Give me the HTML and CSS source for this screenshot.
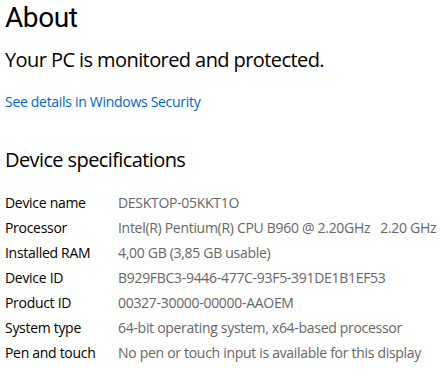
FILE: index.html
```html
<!DOCTYPE html>
<html>
<head>
<meta charset="utf-8">
<link rel="stylesheet" href="styles.css">
</head>
<body>
<main class="page">
  <h1 class="title">About</h1>
  <h2 class="status">Your PC is monitored and protected.</h2>
  <a class="link" href="#">See details in Windows Security</a>
  <h2 class="section">Device specifications</h2>
  <dl class="specs">
    <div class="row"><dt>Device name</dt><dd>DESKTOP-05KKT1O</dd></div>
    <div class="row"><dt>Processor</dt><dd>Intel(R) Pentium(R) CPU B960 @ 2.20GHz&nbsp;&nbsp;&nbsp;2.20 GHz</dd></div>
    <div class="row"><dt>Installed RAM</dt><dd>4,00 GB (3,85 GB usable)</dd></div>
    <div class="row"><dt>Device ID</dt><dd>B929FBC3-9446-477C-93F5-391DE1B1EF53</dd></div>
    <div class="row"><dt>Product ID</dt><dd>00327-30000-00000-AAOEM</dd></div>
    <div class="row"><dt>System type</dt><dd>64-bit operating system, x64-based processor</dd></div>
    <div class="row"><dt>Pen and touch</dt><dd>No pen or touch input is available for this display</dd></div>
  </dl>
</main>
</body>
</html>
```
FILE: styles.css
```css
html, body {
  margin: 0;
  padding: 0;
  background: #ffffff;
}
body {
  font-family: "Open Sans", "Noto Sans", "DejaVu Sans", sans-serif;
  color: #000;
  overflow: hidden;
}
.page {
  padding: 1px 0 0 5px;
  display: flex;
  flex-direction: column;
  align-items: flex-start;
}
.title {
  margin: 0;
  font-family: Roboto, "Open Sans", sans-serif;
  font-size: 28px;
  font-weight: 400;
  line-height: 33px;
  letter-spacing: -0.4px;
}
.status {
  margin: 12px 0 0 0;
  font-size: 20px;
  font-weight: 400;
  line-height: 28px;
  letter-spacing: -0.58px;
}
.link {
  margin-top: 18px;
  font-size: 14px;
  line-height: 20px;
  color: #0067c0;
  text-decoration: none;
  letter-spacing: -0.3px;
}
.section {
  margin: 34px 0 0 0;
  font-size: 20px;
  font-weight: 400;
  line-height: 28px;
  letter-spacing: -0.6px;
}
.specs {
  margin: 16px 0 0 0;
  display: flex;
  flex-direction: column;
}
.row {
  display: grid;
  grid-template-columns: 113px auto;
  height: 25px;
  align-items: center;
  font-size: 14px;
  letter-spacing: -0.3px;
  white-space: nowrap;
}
.row dt {
  color: #000;
}
.row dd {
  margin: 0;
  color: #666666;
}
```
